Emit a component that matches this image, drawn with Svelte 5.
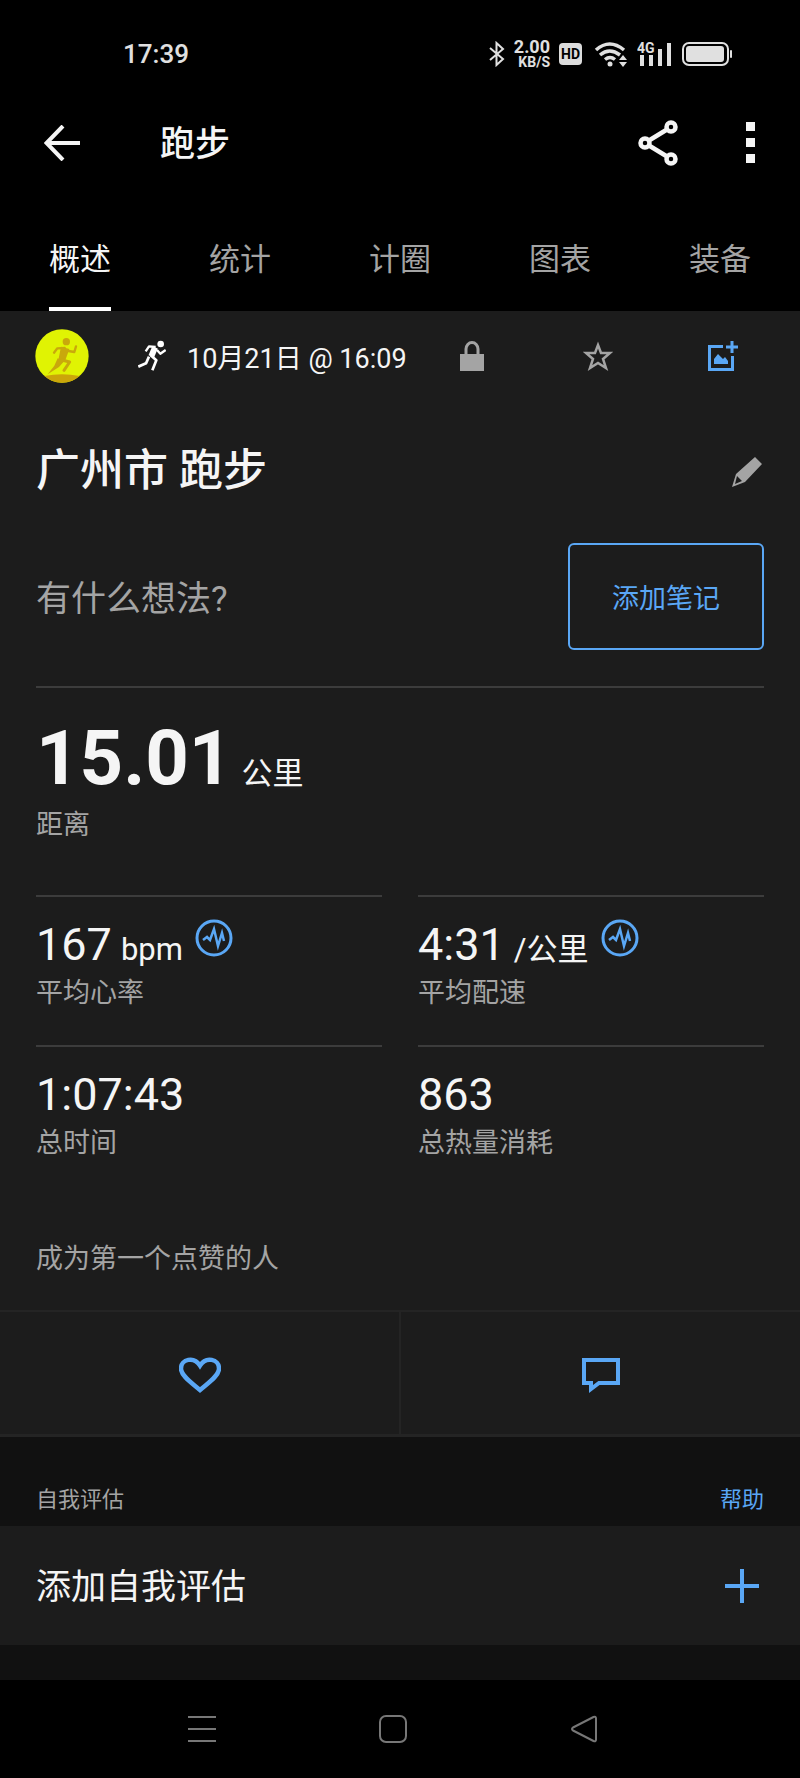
<script lang="ts">
    type Metric = { value: string; unit?: string; label: string; chart?: boolean };

    const tabs = ["概述", "统计", "计圈", "图表", "装备"];
    const metrics: Metric[] = [
        {value: "167", unit: "bpm", label: "平均心率", chart: true},
        {value: "4:31", unit: "/公里", label: "平均配速", chart: true},
        {value: "1:07:43", label: "总时间"},
        {value: "863", label: "总热量消耗"},
    ];

    let activeTab = $state(tabs[0]);
</script>

<div class="screen">
    <div class="status">
        <span class="clock">17:39</span>
        <div class="indicators">
            <svg width="16" height="26" viewBox="0 0 16 26" fill="none" stroke="currentColor" stroke-width="2">
                <path d="M1 7l13 11-6.500 6V2l6.500 6L1 19"/>
            </svg>
            <span class="speed"><b>2.00</b><small>KB/S</small></span>
            <span class="hd">HD</span>
            <svg width="34" height="26" viewBox="0 0 34 26" fill="none" stroke="currentColor" stroke-width="3.500">
                <path d="M2 9q13.500-12 28 0M6 14q9.500-8 20 0M11 18.500q5-4 10 0"/>
                <g fill="currentColor" stroke="none">
                    <circle cx="16" cy="23" r="2.500"/>
                    <path d="M25 19l4-5 4 5zM25 21h8l-4 5z"/>
                </g>
            </svg>
            <svg width="36" height="26" viewBox="0 0 36 26" fill="currentColor">
                <text x="0" y="12" font-size="14" font-weight="700">4G</text>
                <path d="M3 14h4v11H3zM12 14h4v11h-4zM21 8h4v17h-4zM30 2h4v23h-4z"/>
            </svg>
            <svg width="51" height="24" viewBox="0 0 51 24" fill="currentColor">
                <rect x="1" y="1" width="45" height="22" rx="6" fill="none" stroke="currentColor" stroke-width="2"/>
                <rect x="4" y="4" width="38" height="16" rx="3"/>
                <rect x="48" y="8" width="2" height="8" rx="1"/>
            </svg>
        </div>
    </div>

    <header class="appbar">
        <button aria-label="返回">
            <svg width="36" height="36" viewBox="0 0 36 36" fill="none" stroke="currentColor" stroke-width="4">
                <path d="M36 18H3M19 1L2.500 18 19 35"/>
            </svg>
        </button>
        <h1>跑步</h1>
        <button class="share" aria-label="分享">
            <svg width="40" height="46" viewBox="0 0 40 46" fill="none" stroke="currentColor" stroke-width="4.500">
                <circle cx="7" cy="23" r="4.500"/>
                <circle cx="33" cy="7" r="4.500"/>
                <circle cx="33" cy="39" r="4.500"/>
                <path d="M11 20.500l18-11M11 25.500l18 11"/>
            </svg>
        </button>
        <button aria-label="更多">
            <svg width="10" height="42" viewBox="0 0 10 42" fill="currentColor">
                <path d="M0 0h9v9H0zM0 16h9v9H0zM0 32h9v9H0z"/>
            </svg>
        </button>
    </header>

    <div class="tabs" role="tablist">
        {#each tabs as t (t)}
            <button class="tab" class:active={activeTab === t} role="tab" aria-selected={activeTab === t}
                    onclick={() => (activeTab = t)}><span>{t}</span></button>
        {/each}
    </div>

    <main>
        <section class="activity">
            <div class="meta">
                <svg width="54" height="54" viewBox="106 56 162 162" fill="none" stroke="#c9a80c" stroke-linecap="round" stroke-linejoin="round">
                    <circle cx="187" cy="137" r="80" fill="#e0f303" stroke="none"/>
                    <path d="M134 197q53-10 106 0a80 80 0 0 1-106 0z" fill="#cba60a" stroke="none"/>
                    <circle cx="200" cy="94" r="11" fill="#c9a80c" stroke="none"/>
                    <path d="M163 127l10-13 22-1M206 122l18 3 5-17" stroke-width="7"/>
                    <path d="M184 109l25 7-12 34-22 4z" fill="#c9a80c" stroke="none"/>
                    <path d="M174 144l20 8-16 18-34 22 20-26z" fill="#c9a80c" stroke="none"/>
                    <path d="M186 149l24 6-17 25" stroke-width="9"/>
                </svg>
                <svg class="sport" width="28" height="32" viewBox="413 90 84 96" fill="none" stroke="currentColor" stroke-linejoin="round">
                    <circle cx="481" cy="102" r="10" fill="currentColor" stroke="none"/>
                    <path d="M436 124l10-15 20 2M470 120l10 11 16-11" stroke-width="7"/>
                    <path d="M464 112l-11 27" stroke-width="18"/>
                    <path d="M451 136l17 15-12 30M446 140l-9 20-23 10" stroke-width="8"/>
                </svg>
                <time datetime="10-21T16:09">10月21日 @ 16:09</time>
                <button aria-label="隐私">
                    <svg width="24" height="30" viewBox="0 0 24 30" fill="currentColor">
                        <path d="M0 13h24v17H0z"/>
                        <path d="M6 14V8a6 6.500 0 0 1 12 0v6" fill="none" stroke="currentColor" stroke-width="3"/>
                    </svg>
                </button>
                <button aria-label="收藏">
                    <svg width="30" height="30" viewBox="0 0 30 30" fill="none" stroke="currentColor" stroke-width="2.500">
                        <path d="M15 4l3 8h9l-7 6 3 9-8-5-8 5 3-9-7-6h9z"/>
                    </svg>
                </button>
                <button class="link" aria-label="添加照片">
                    <svg width="30" height="32" viewBox="0 0 30 32" fill="none" stroke="currentColor" stroke-width="3">
                        <path d="M15 6.500H1.500v23h23V16M18 7h12M24 1v12"/>
                        <path d="M6 24v-5l4-5 5 5 2-2 3 4v3z" fill="currentColor" stroke="none"/>
                    </svg>
                </button>
            </div>

            <div class="name">
                <h2>广州市 跑步</h2>
                <button aria-label="编辑名称">
                    <svg width="30" height="30" viewBox="0 0 30 30" fill="currentColor" fill-rule="evenodd">
                        <path d="M23 0l7 7-17 18-13 5 4-13zM5 19l-2 8 7-3z"/>
                    </svg>
                </button>
            </div>

            <div class="note">
                <p>有什么想法?</p>
                <button>添加笔记</button>
            </div>

            <div class="distance">
                <p class="total"><strong>15.01</strong> <span>公里</span></p>
                <p class="label">距离</p>
            </div>

            <div class="metrics">
                {#each metrics as m (m.label)}
                    <div class="metric">
                        <div class="value">
                            <p><strong>{m.value}</strong>{#if m.unit}{" "}<span>{m.unit}</span>{/if}</p>
                            {#if m.chart}
                                <button class="link" aria-label={`${m.label}图表`}>
                                    <svg width="38" height="38" viewBox="0 0 38 38" fill="none" stroke="currentColor">
                                        <circle cx="19" cy="19" r="17" stroke-width="3"/>
                                        <path d="M8 21l4-3 3 3 4-11 4 17 4-13 2 8" stroke-width="2.500"/>
                                    </svg>
                                </button>
                            {/if}
                        </div>
                        <p class="label">{m.label}</p>
                    </div>
                {/each}
            </div>

            <p class="likes">成为第一个点赞的人</p>

            <div class="actions">
                <button aria-label="点赞">
                    <svg width="42" height="36" viewBox="0 0 42 36" fill="none" stroke="currentColor" stroke-width="4.500">
                        <path d="M21 33C13 26 2 19 2 11.500 2 2 15-1 21 8.500 27-1 40 2 40 11.500 40 19 29 26 21 33z"/>
                    </svg>
                </button>
                <button aria-label="评论">
                    <svg width="38" height="36" viewBox="0 0 38 36" fill="none" stroke="currentColor" stroke-width="4">
                        <path d="M2 3h34v23H17l-8 6v-6H2z"/>
                    </svg>
                </button>
            </div>
        </section>

        <section>
            <div class="heading">
                <h3>自我评估</h3>
                <a href="#help">帮助</a>
            </div>
            <button class="evaluate">
                <span>添加自我评估</span>
                <svg width="34" height="34" viewBox="0 0 34 34" fill="none" stroke="currentColor" stroke-width="4">
                    <path d="M0 17h34M17 0v34"/>
                </svg>
            </button>
        </section>
    </main>

    <nav class="system">
        <button aria-label="最近任务">
            <svg width="28" height="28" viewBox="0 0 28 28" fill="none" stroke="currentColor" stroke-width="2">
                <path d="M0 2h28M0 14h28M0 26h28"/>
            </svg>
        </button>
        <button aria-label="主屏幕">
            <svg width="28" height="28" viewBox="0 0 28 28" fill="none" stroke="currentColor" stroke-width="2">
                <rect x="1" y="1" width="26" height="26" rx="6"/>
            </svg>
        </button>
        <button aria-label="后退">
            <svg width="28" height="28" viewBox="0 0 28 28" fill="none" stroke="currentColor" stroke-width="2" stroke-linejoin="round">
                <path d="M23.500 2L3 12.500q-2 1.500 0 3L23.500 26q2.500 1 2.500-1.500v-21Q26 1 23.500 2z"/>
            </svg>
        </button>
    </nav>
</div>

<style>
    :global(body) {
        margin: 0;
        background: #000;
    }

    .screen {
        --text: #f5f5f5;
        --muted: #a4a4a4;
        --blue: #5aa7f5;
        --card: #1c1c1c;
        --line: #3c3c3c;

        display: flex;
        flex-direction: column;
        min-height: 100vh;
        background: #000;
        color: var(--text);
        font-family: Roboto, "Noto Sans CJK SC", sans-serif;
        font-size: 27px;
        line-height: 36px;
    }

    h1, h2, h3, p {
        margin: 0;
        font-weight: 400;
    }

    button {
        display: flex;
        align-items: center;
        justify-content: center;
        padding: 0;
        border: none;
        background: none;
        color: inherit;
        font: inherit;
        cursor: pointer;
    }

    svg {
        display: block;
        flex: none;
    }

    .link {
        color: var(--blue);
    }

    .status {
        display: flex;
        align-items: center;
        justify-content: space-between;
        padding: 33px 67px 33px 123px;
        line-height: 40px;
        color: #e0e0e0;
    }

    .clock {
        padding-top: 1px;
        font-size: 26px;
        font-weight: 500;
    }

    .indicators {
        display: flex;
        align-items: center;
        gap: 9px;
    }

    .speed {
        display: flex;
        flex-direction: column;
        align-items: flex-end;
    }

    .speed b {
        font-size: 18px;
        font-weight: 700;
        line-height: 16px;
    }

    .speed small {
        font-size: 14px;
        font-weight: 700;
        line-height: 14px;
    }

    .hd {
        margin-right: 3px;
        padding: 0 2px;
        border-radius: 4px;
        background: #dcdcdc;
        color: #000;
        font-size: 14px;
        font-weight: 700;
        line-height: 22px;
    }

    .appbar {
        display: flex;
        align-items: center;
        padding: 11px 44px;
    }

    .appbar h1 {
        flex: 1;
        margin-left: 80px;
        padding-top: 4px;
        font-size: 35px;
        font-weight: 500;
        line-height: 46px;
    }

    .share {
        margin-right: 68px;
    }

    .tabs {
        display: flex;
    }

    .tab {
        flex: 1;
        color: var(--muted);
        font-size: 31px;
        line-height: 40px;
    }

    .tab span {
        padding: 61px 0 27px;
        border-bottom: 4px solid transparent;
    }

    .tab.active {
        color: var(--text);
    }

    .tab.active span {
        border-color: #fff;
    }

    main {
        flex: 1;
        background: #111;
    }

    .activity {
        background: var(--card);
    }

    .meta {
        display: flex;
        align-items: center;
        padding: 18px 14px 0 35px;
        color: var(--muted);
    }

    .meta button {
        flex: 1;
    }

    .sport {
        margin: 0 21px 0 49px;
        color: #fff;
    }

    .meta time {
        margin-right: 3px;
        padding-top: 5px;
        color: var(--text);
    }

    .name {
        display: flex;
        align-items: flex-end;
        justify-content: space-between;
        padding: 58px 38px 0 36px;
        color: var(--muted);
    }

    .name h2 {
        color: var(--text);
        font-size: 44px;
        font-weight: 500;
        line-height: 60px;
    }

    .name button {
        padding-bottom: 14px;
    }

    .note {
        display: flex;
        align-items: center;
        justify-content: space-between;
        margin: 0 36px;
        padding: 42px 0 36px;
        border-bottom: 2px solid var(--line);
    }

    .note p {
        padding-top: 7px;
        color: var(--muted);
        font-size: 35px;
        line-height: 48px;
    }

    .note button {
        padding: 36px 42px 31px;
        border: 2px solid var(--blue);
        border-radius: 6px;
        color: var(--blue);
    }

    .distance {
        padding: 25px 36px 52px;
    }

    .total,
    .value p {
        display: flex;
        align-items: baseline;
        gap: 9px;
    }

    .total strong {
        font-size: 76px;
        font-weight: 700;
        line-height: 90px;
    }

    .total span,
    .value span {
        font-size: 31px;
    }

    .label {
        color: var(--muted);
    }

    .distance .label {
        padding-top: 4px;
    }

    .metrics {
        display: grid;
        grid-template-columns: 1fr 1fr;
        column-gap: 36px;
        padding: 0 36px;
    }

    .metric {
        padding: 18px 0 34px;
        border-top: 2px solid var(--line);
    }

    .value {
        display: flex;
        align-items: flex-start;
        gap: 12px;
    }

    .value strong {
        font-size: 45px;
        font-weight: 400;
        line-height: 60px;
    }

    .value button {
        padding-top: 4px;
    }

    .likes {
        padding: 46px 36px 33px;
        color: var(--muted);
    }

    .actions {
        display: flex;
        border: solid #242424;
        border-width: 2px 0 3px;
        color: var(--blue);
    }

    .actions button {
        flex: 1;
        padding: 45px 0 41px;
    }

    .actions button + button {
        border-left: 2px solid #242424;
    }

    .heading {
        display: flex;
        justify-content: space-between;
        padding: 48px 36px 11px;
        font-size: 22px;
        line-height: 30px;
    }

    .heading h3 {
        color: var(--muted);
        font-size: 22px;
    }

    .heading a {
        color: var(--blue);
        text-decoration: none;
    }

    .evaluate {
        width: 100%;
        justify-content: space-between;
        padding: 32px 41px 31px 36px;
        background: var(--card);
        font-size: 35px;
        line-height: 52px;
    }

    .evaluate span {
        padding-top: 4px;
    }

    .evaluate svg {
        color: var(--blue);
    }

    .system {
        display: flex;
        justify-content: space-between;
        padding: 35px 202px 35px 188px;
        color: #777;
    }
</style>
